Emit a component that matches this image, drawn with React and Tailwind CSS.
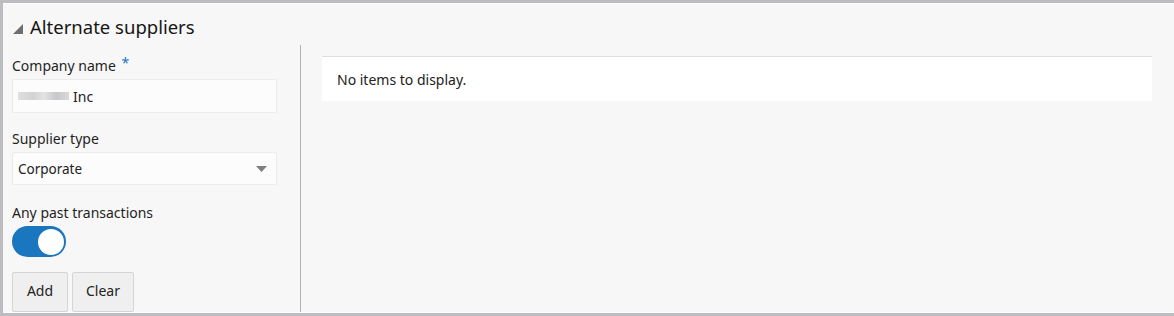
import React from "react";

export default function App() {
  const font = { fontFamily: '"Noto Sans", "Open Sans", sans-serif' };
  return (
    <div
      className="w-[1174px] h-[316px] bg-[#bdbdc1] pl-[3px] py-[3px] text-[#1a1a1a]"
      style={font}
    >
      <div className="h-full bg-[#f7f7f7] border-t border-b border-[#fcfcfd] overflow-hidden flex flex-col">
        <div className="h-[41px] flex items-end pl-[10px] pb-[6px] shrink-0">
          <svg width="10" height="10" viewBox="0 0 10 10" className="mb-[5px] mr-[7px]">
            <polygon points="10,0 10,10 0,10" fill="#6e6e6e" />
          </svg>
          <span className="text-[18.5px] leading-[24px] text-[#161616]">Alternate suppliers</span>
        </div>
        <div className="flex flex-1 min-h-0">
          <div className="w-[298px] shrink-0 border-r border-[#b3b3b3] pl-[9px] pt-[11px] flex flex-col">
            <div className="text-[14px] leading-[20px] h-[24px] text-[#1f1f1f]">
              Company name <span className="text-[#1c7abf] relative top-[-3px] ml-[2px]">*</span>
            </div>
            <div className="w-[265px] h-[34px] bg-[#fcfcfc] border border-[#ebebeb] rounded-[2px] flex items-center pl-[5px] text-[14px]">
              <span className="inline-block w-[51px] h-[8px] mr-[4px] bg-[linear-gradient(90deg,#d9d9d9_0%,#c8c8cc_30%,#dddddd_50%,#bcbcc0_75%,#d0d0d0_100%)] opacity-80" />
              <span className="text-[#222]">Inc</span>
            </div>
            <div className="text-[14px] leading-[20px] mt-[16px] h-[24px] text-[#1f1f1f]">Supplier type</div>
            <div className="w-[265px] h-[34px] bg-[#fcfcfc] border border-[#ebebeb] rounded-[2px] flex items-center justify-between pl-[5px] pr-[9px] text-[13.5px] text-[#222]">
              <span>Corporate</span>
              <svg width="11" height="6" viewBox="0 0 11 6">
                <polygon points="0,0 11,0 5.5,6" fill="#7f7f7f" />
              </svg>
            </div>
            <div className="text-[14px] leading-[20px] mt-[18px] h-[22px] text-[#1f1f1f]">Any past transactions</div>
            <div className="w-[54px] h-[32px] rounded-full bg-[#1a77bf] relative mt-[1px]">
              <div className="absolute right-[2px] top-[3px] w-[26px] h-[26px] rounded-full bg-white" />
            </div>
            <div className="flex gap-[4px] mt-[15px]">
              <button className="w-[56px] h-[40px] bg-[#efefef] border border-[#d5d5d5] rounded-[2px] text-[14px] text-[#222] pb-[4px]">
                Add
              </button>
              <button className="w-[62px] h-[40px] bg-[#efefef] border border-[#d5d5d5] rounded-[2px] text-[14px] text-[#222] pb-[4px]">
                Clear
              </button>
            </div>
          </div>
          <div className="flex-1 pl-[21px] pr-[22px] pt-[11px]">
            <div className="h-[45px] bg-white border-t border-[#dedede] flex items-center pl-[15px] text-[14px] text-[#222]">
              No items to display.
            </div>
          </div>
        </div>
      </div>
    </div>
  );
}
